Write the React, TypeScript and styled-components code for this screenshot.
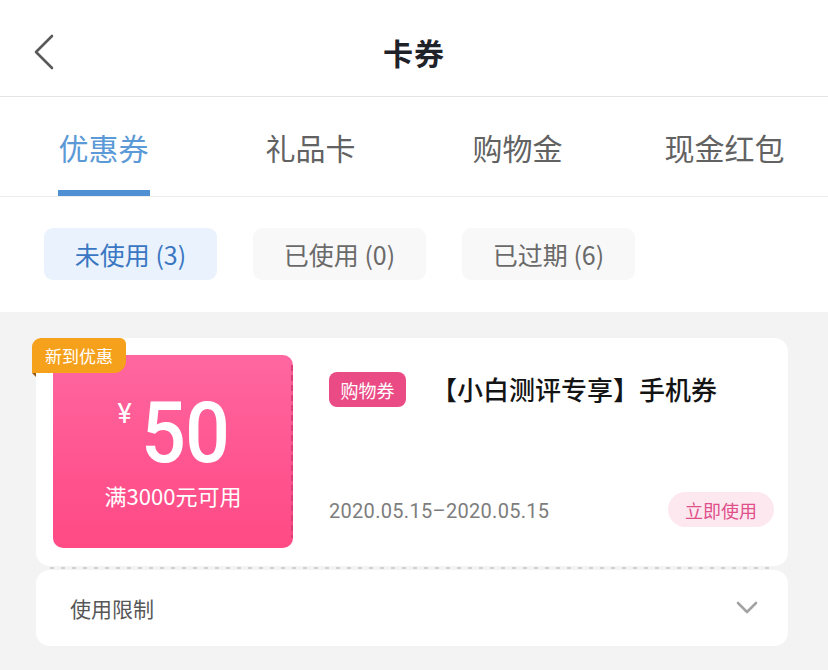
import React from "react";
import styled, { createGlobalStyle } from "styled-components";

const GlobalStyle = createGlobalStyle`
  html, body { margin: 0; padding: 0; }
  body {
    font-family: "Noto Sans CJK SC", "Noto Sans", sans-serif;
    background: #f3f3f3;
  }
  * { box-sizing: border-box; }
`;

const Page = styled.div`
  width: 828px;
  height: 670px;
  overflow: hidden;
  background: #f3f3f3;
  display: flex;
  flex-direction: column;
`;

const Header = styled.header`
  height: 97px;
  flex: none;
  background: #fff;
  border-bottom: 1px solid #e4e4e4;
  display: grid;
  grid-template-columns: 1fr auto 1fr;
  align-items: center;
  padding: 8px 33px 0 33px;
`;

const BackButton = styled.button`
  border: 0;
  background: none;
  padding: 0;
  width: 24px;
  height: 36px;
  display: flex;
  align-items: center;
  justify-self: start;
  color: #5a5a5a;
`;

const Title = styled.h1`
  margin: 0;
  font-size: 30px;
  font-weight: 700;
  color: #1f2329;
  letter-spacing: 1px;
`;

const TabBar = styled.nav`
  height: 100px;
  flex: none;
  background: #fff;
  border-bottom: 1px solid #ececec;
  display: grid;
  grid-template-columns: repeat(4, 1fr);
`;

const Tab = styled.div<{ $active?: boolean }>`
  display: flex;
  flex-direction: column;
  align-items: center;
  justify-content: space-between;
  padding-top: 29px;
  font-size: 30px;
  line-height: 42px;
  color: ${(p) => (p.$active ? "#5b9ad6" : "#626262")};
`;

const TabIndicator = styled.span<{ $active?: boolean }>`
  width: 92px;
  height: 6px;
  background: ${(p) => (p.$active ? "#4f90d4" : "transparent")};
`;

const FilterRow = styled.div`
  flex: none;
  height: 115px;
  background: #fff;
  display: flex;
  gap: 36px;
  padding: 31px 44px 0;
`;

const Chip = styled.div<{ $active?: boolean }>`
  width: 173px;
  height: 52px;
  border-radius: 9px;
  display: flex;
  align-items: center;
  justify-content: center;
  font-size: 25px;
  background: ${(p) => (p.$active ? "#e9f2fd" : "#f8f8f8")};
  color: ${(p) => (p.$active ? "#3a76c2" : "#6a6a6a")};
`;

const List = styled.div`
  padding: 26px 40px 0 36px;
  display: flex;
  flex-direction: column;
`;

const CouponCard = styled.div`
  position: relative;
  background: #fff;
  border-radius: 14px;
  height: 228px;
  padding: 17px 14px 39px 17px;
  display: flex;
  gap: 36px;
`;

const NewBadge = styled.div`
  position: absolute;
  left: -4px;
  top: 0;
  width: 94px;
  height: 35px;
  background: #f6a11c;
  color: #fff;
  font-size: 17px;
  display: flex;
  align-items: center;
  justify-content: center;
  border-radius: 9px 6px 12px 0;
  z-index: 2;
  &::after {
    content: "";
    position: absolute;
    left: 0;
    top: 35px;
    border-top: 4px solid #9a5a10;
    border-left: 4px solid transparent;
  }
`;

const Ticket = styled.div`
  position: relative;
  flex: none;
  width: 240px;
  height: 193px;
  border-radius: 10px;
  background: linear-gradient(180deg, #ff67a0 0%, #ff5590 55%, #ff4a85 100%);
  color: #fff;
  display: flex;
  flex-direction: column;
  align-items: center;
  padding-top: 47px;
  &::before {
    content: "";
    position: absolute;
    right: 0;
    top: 10px;
    bottom: 10px;
    width: 2px;
    background: repeating-linear-gradient(180deg, #dc3f78 0 6px, rgba(220, 63, 120, 0.2) 6px 10px);
  }
  &::after {
    content: "";
    position: absolute;
    right: -2px;
    top: 10px;
    bottom: 10px;
    width: 4px;
    background-image: radial-gradient(circle at 4px 8px, #fff 2px, transparent 2.5px);
    background-size: 4px 10px;
  }
`;

const Amount = styled.div`
  display: flex;
  align-items: flex-start;
  gap: 9px;
  height: 64px;
  margin-left: -2px;
`;

const Yen = styled.span`
  font-family: "Roboto", "Liberation Sans", sans-serif;
  font-size: 27px;
  line-height: 24px;
`;

const Value = styled.span`
  font-family: "Roboto", "Liberation Sans", sans-serif;
  font-size: 86px;
  line-height: 62px;
  font-weight: 500;
  display: inline-block;
  transform: scaleX(0.92);
  transform-origin: left center;
  width: 86px;
  letter-spacing: -1px;
`;

const Condition = styled.div`
  margin-top: 14px;
  font-size: 22px;
  line-height: 30px;
`;

const Info = styled.div`
  flex: 1;
  display: flex;
  flex-direction: column;
  justify-content: space-between;
  padding-top: 17px;
`;

const TitleRow = styled.div`
  display: flex;
  align-items: center;
  gap: 25px;
`;

const TypeTag = styled.span`
  width: 77px;
  height: 35px;
  border-radius: 8px;
  background: #ea4b85;
  color: #fff;
  font-size: 18px;
  display: flex;
  align-items: center;
  justify-content: center;
`;

const CouponName = styled.span`
  font-size: 26px;
  font-weight: 500;
  color: #141414;
  margin-top: -2px;
`;

const BottomRow = styled.div`
  display: flex;
  align-items: center;
  justify-content: space-between;
`;

const DateText = styled.span`
  font-family: "Roboto", "Noto Sans CJK SC", sans-serif;
  font-size: 20px;
  letter-spacing: 0.3px;
  color: #7d7d7d;
  margin-top: 2px;
`;

const UseButton = styled.button`
  width: 106px;
  height: 35px;
  border: 0;
  border-radius: 18px;
  background: #fde8f0;
  color: #df4f8a;
  font-family: "Noto Sans CJK SC", sans-serif;
  font-size: 18px;
  padding: 0;
`;

const Divider = styled.div`
  height: 4px;
  margin: 0 14px;
  background-image: linear-gradient(90deg, #d2d2d2 0 4px, transparent 4px 11px);
  background-size: 11px 2px;
  background-repeat: repeat-x;
  background-position: 0 1px;
`;

const LimitRow = styled.div`
  background: #fff;
  border-radius: 14px;
  height: 76px;
  display: flex;
  align-items: center;
  justify-content: space-between;
  padding: 0 30px 0 34px;
  font-size: 21px;
  color: #575757;
`;

const ChevronLeft = () => (
  <svg width="22" height="36" viewBox="0 0 22 36" fill="none">
    <path d="M19 2 L3 18 L19 34" stroke="currentColor" strokeWidth="2.6" strokeLinecap="round" strokeLinejoin="round" />
  </svg>
);

const ChevronDown = () => (
  <svg width="22" height="14" viewBox="0 0 22 14" fill="none">
    <path d="M2 2 L11 11 L20 2" stroke="#a3a3a3" strokeWidth="2.6" strokeLinecap="round" strokeLinejoin="round" />
  </svg>
);

const tabs = ["优惠券", "礼品卡", "购物金", "现金红包"];
const chips = ["未使用 (3)", "已使用 (0)", "已过期 (6)"];

export default function App() {
  return (
    <Page>
      <GlobalStyle />
      <Header>
        <BackButton aria-label="返回">
          <ChevronLeft />
        </BackButton>
        <Title>卡券</Title>
        <span />
      </Header>
      <TabBar>
        {tabs.map((t, i) => (
          <Tab key={t} $active={i === 0}>
            {t}
            <TabIndicator $active={i === 0} />
          </Tab>
        ))}
      </TabBar>
      <FilterRow>
        {chips.map((c, i) => (
          <Chip key={c} $active={i === 0}>
            {c}
          </Chip>
        ))}
      </FilterRow>
      <List>
        <CouponCard>
          <NewBadge>新到优惠</NewBadge>
          <Ticket>
            <Amount>
              <Yen>¥</Yen>
              <Value>50</Value>
            </Amount>
            <Condition>满3000元可用</Condition>
          </Ticket>
          <Info>
            <TitleRow>
              <TypeTag>购物券</TypeTag>
              <CouponName>【小白测评专享】手机券</CouponName>
            </TitleRow>
            <BottomRow>
              <DateText>2020.05.15–2020.05.15</DateText>
              <UseButton>立即使用</UseButton>
            </BottomRow>
          </Info>
        </CouponCard>
        <Divider />
        <LimitRow>
          使用限制
          <ChevronDown />
        </LimitRow>
      </List>
    </Page>
  );
}
